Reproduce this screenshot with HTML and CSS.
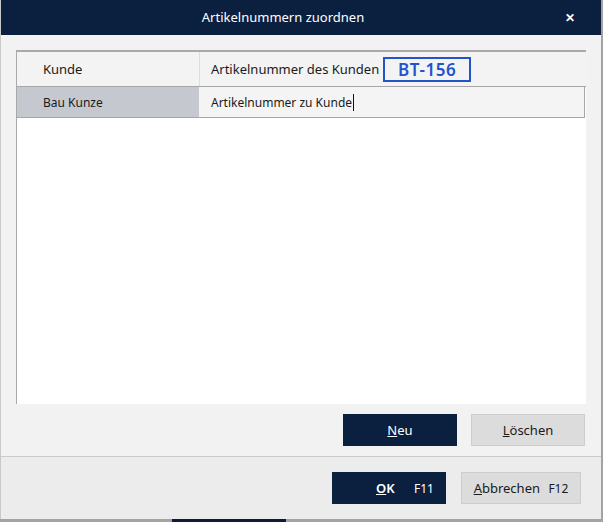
FILE: index.html
```html
<!DOCTYPE html>
<html>
<head>
<meta charset="utf-8">
<title>Artikelnummern zuordnen</title>
<link rel="stylesheet" href="styles.css">
</head>
<body>
<div class="screen">
  <div class="dialog">
    <div class="titlebar">
      <div class="title">Artikelnummern zuordnen</div>
      <div class="close">&#x2715;</div>
    </div>

    <div class="content">
      <div class="grid">
        <div class="grid-head">
          <div class="cell col1">Kunde</div>
          <div class="cell col2">Artikelnummer des Kunden <span class="badge">BT-156</span></div>
        </div>
        <div class="grid-row">
          <div class="cell col1 selected">Bau Kunze</div>
          <div class="cell col2 edit">Artikelnummer zu Kunde<span class="caret"></span></div>
        </div>
        <div class="grid-empty"></div>
      </div>

      <div class="actions">
        <button class="button button-dark"><u>N</u>eu</button>
        <button class="button button-light"><u>L</u>öschen</button>
      </div>
    </div>

    <div class="footer">
      <button class="button button-dark btn-ok"><u>O</u>K <span class="key">F11</span></button>
      <button class="button button-light btn-cancel"><u>A</u>bbrechen <span class="key">F12</span></button>
    </div>
  </div>
  <div class="edge-right"></div>
</div>
<div class="edge-bottom"><div class="task"></div></div>
</body>
</html>
```

FILE: styles.css
```css
html, body {
  margin: 0;
  padding: 0;
  background: #a3a3a3;
  font-family: "Noto Sans", "Open Sans", sans-serif;
  font-size: 13px;
  color: #1a1a1a;
}

.screen {
  display: flex;
  height: 519px;
}

.edge-right {
  width: 2px;
  background: #a3a3a3;
}

.edge-bottom {
  height: 3px;
  background: #a3a3a3;
}

.edge-bottom .task {
  margin-left: 172px;
  width: 114px;
  height: 3px;
  background: #0b1c38;
}

/* dialog window */
.dialog {
  width: 600px;
  border-left: 1px solid #c9c9c9;
  display: flex;
  flex-direction: column;
  background: #f2f2f2;
}

.titlebar {
  height: 35px;
  background: #0b1f3f;
  color: #fff;
  display: flex;
  align-items: center;
}

.title {
  flex: 1;
  text-align: center;
  padding-left: 2px;
  font-size: 13px;
  margin-top: -1px;
}

.close {
  width: 36px;
  text-align: left;
  font-size: 12px;
  font-weight: bold;
  padding-left: 2px;
}

.content {
  flex: 1;
  padding: 15px 15px 0 15px;
  border-bottom: 1px solid #cbcbcb;
  display: flex;
  flex-direction: column;
}

/* grid */
.grid {
  height: 352px;
  background: #fff;
  border-top: 2px solid #a9a9a9;
  border-left: 1px solid #a9a9a9;
  display: flex;
  flex-direction: column;
}

.grid-head {
  display: flex;
  height: 34px;
  background: #f3f3f3;
  border-bottom: 1px solid #a6a6a6;
}

.grid-row {
  display: flex;
  height: 30px;
  background: #f4f4f4;
  border: 1px solid #a6a6a6;
  border-top: none;
  border-left: none;
  margin-right: 1px;
}

.cell {
  display: flex;
  align-items: center;
}

.col1 {
  width: 156px;
  padding-left: 26px;
}

.col2 {
  flex: 1;
  padding-left: 11px;
}

.grid-head .col2 {
  border-left: 1px solid #dcdcdc;
}

.selected {
  background: #c5c8cf;
  font-size: 12px;
}

.edit {
  font-size: 12px;
  padding-left: 12px;
}

.caret {
  display: inline-block;
  width: 1px;
  height: 17px;
  background: #111;
  margin-left: 1px;
}

.badge {
  display: inline-block;
  margin-left: 4px;
  width: 84px;
  height: 21px;
  line-height: 21px;
  border: 2px solid #2553cc;
  color: #2553cc;
  font-weight: 600;
  font-size: 17px;
  letter-spacing: 0.6px;
  text-align: center;
}

.grid-empty {
  flex: 1;
}

/* buttons */
.actions {
  display: flex;
  justify-content: flex-end;
  gap: 14px;
  padding: 10px 1px 0 0;
}

.button {
  width: 114px;
  height: 32px;
  border: none;
  font-family: inherit;
  font-size: 13px;
  padding: 0;
  cursor: pointer;
}

.button-dark {
  background: #0b1f3f;
  color: #fff;
}

.button-light {
  background: #dcdcdc;
  border: 1px solid #cdcdcd;
  color: #1a1a1a;
}

.footer {
  height: 62px;
  background: #ececec;
  display: flex;
  justify-content: flex-end;
  gap: 15px;
  padding: 15px 20px 0 0;
  box-sizing: border-box;
}

.btn-ok {
  font-weight: 600;
  padding-left: 32px;
}

.btn-ok .key {
  font-weight: normal;
  font-size: 12px;
  margin-left: 16px;
}

.btn-cancel {
  width: 120px;
}

.btn-cancel .key {
  font-size: 12px;
  margin-left: 5px;
}
```
